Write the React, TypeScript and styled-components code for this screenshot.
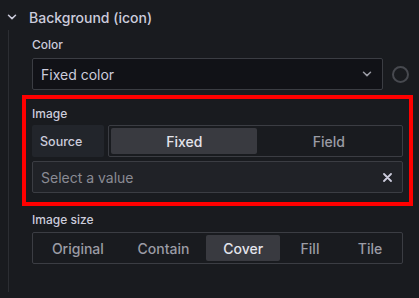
import React, { useState } from "react";
import styled, { createGlobalStyle } from "styled-components";

const colors = {
  BG: "#191b1f",
  CANVAS: "#111217",
  SECONDARY: "#22252b",
  BORDER: "#3b3d43",
  RAIL: "#2c2e33",
  TEXT: "#ccccdc",
  TEXT_STRONG: "#e4e4ec",
  TEXT_MUTED: "#9b9ca5",
  PLACEHOLDER: "#8a8b94",
  ACTIVE: "#393a40",
  HIGHLIGHT: "#ff0000",
};

const GlobalStyle = createGlobalStyle`
  html, body {
    margin: 0;
    background: ${colors.BG};
    font-family: Inter, "Noto Sans", sans-serif;
    color: ${colors.TEXT};
  }
  * { box-sizing: border-box; }
`;

const Page = styled.div`
  width: 419px;
  height: 298px;
  overflow: hidden;
`;

const Header = styled.div`
  display: flex;
  align-items: center;
  gap: 12px;
  height: 26px;
  margin-top: 4px;
  padding-left: 7px;
  font-size: 14px;
  font-weight: 500;
`;

const Body = styled.div`
  margin-left: 8px;
  border-left: 1px solid ${colors.RAIL};
  padding: 7px 16px 0 23px;
  height: 262px;
`;

const Field = styled.div`
  display: flex;
  flex-direction: column;
`;

const Label = styled.div<{ $gap?: number }>`
  font-size: 12px;
  font-weight: 500;
  line-height: 16px;
  margin-bottom: ${(p) => p.$gap ?? 4}px;
`;

const Row = styled.div`
  display: flex;
  align-items: center;
  gap: 9px;
  margin-right: -6px;
`;

const Input = styled.div<{ $tone?: "canvas" | "raised" }>`
  flex: 1 0 auto;
  display: flex;
  align-items: center;
  justify-content: space-between;
  height: 32px;
  padding: 0 10px 0 8px;
  border: 1px solid ${colors.BORDER};
  border-radius: 2px;
  background: ${(p) => (p.$tone === "raised" ? "#202227" : colors.CANVAS)};
  font-size: 14px;
  color: ${colors.TEXT};
`;

const Placeholder = styled.span`
  color: ${colors.PLACEHOLDER};
`;

const Swatch = styled.div`
  width: 17px;
  height: 17px;
  border-radius: 50%;
  border: 2px solid #47494f;
  flex-shrink: 0;
`;

const Highlight = styled.div`
  margin: 5px -10px 6px;
  border: 4px solid ${colors.HIGHLIGHT};
  padding: 7px 6px 9px;
  display: flex;
  flex-direction: column;
`;

const InlineRow = styled.div`
  display: flex;
  gap: 4px;
  margin-bottom: 4px;
`;

const InlineLabel = styled.div`
  width: 72px;
  height: 32px;
  display: flex;
  align-items: center;
  padding: 0 8px;
  background: ${colors.SECONDARY};
  border-radius: 2px;
  font-size: 12.5px;
  font-weight: 500;
`;

const Group = styled.div`
  flex: 1 0 auto;
  display: flex;
  height: 32px;
  padding: 2px;
  border: 1px solid ${colors.BORDER};
  border-radius: 2px;
`;

const Option = styled.button<{ $active: boolean }>`
  flex: 1 1 auto;
  min-width: 60px;
  padding: 0 16px;
  border: none;
  border-radius: 2px;
  font-family: inherit;
  font-size: 14px;
  font-weight: 500;
  color: ${(p) => (p.$active ? colors.TEXT_STRONG : colors.TEXT_MUTED)};
  background: ${(p) => (p.$active ? colors.ACTIVE : "transparent")};
  cursor: pointer;
`;

function Chevron({ color = colors.TEXT_MUTED }: { color?: string }) {
  return (
    <svg width="10" height="6" viewBox="0 0 10 6" fill="none">
      <path d="M1.5 1.2 5 4.6l3.5-3.4" stroke={color} strokeWidth="1.5" strokeLinecap="round" strokeLinejoin="round" />
    </svg>
  );
}

function Cross() {
  return (
    <svg width="9" height="9" viewBox="0 0 9 9" fill="none">
      <path d="M1 1l7 7M8 1 1 8" stroke={colors.TEXT} strokeWidth="1.8" strokeLinecap="round" />
    </svg>
  );
}

function RadioGroup({ options, initial }: { options: string[]; initial: string }) {
  const [value, setValue] = useState(initial);
  return (
    <Group>
      {options.map((o) => (
        <Option key={o} $active={o === value} onClick={() => setValue(o)}>
          {o}
        </Option>
      ))}
    </Group>
  );
}

export default function App() {
  return (
    <Page>
      <GlobalStyle />
      <Header>
        <Chevron color={colors.TEXT} />
        Background (icon)
      </Header>
      <Body>
        <Field>
          <Label $gap={5}>Color</Label>
          <Row>
            <Input>
              Fixed color
              <Chevron />
            </Input>
            <Swatch />
          </Row>
        </Field>
        <Highlight>
          <Label $gap={3}>Image</Label>
          <InlineRow>
            <InlineLabel>Source</InlineLabel>
            <RadioGroup options={["Fixed", "Field"]} initial="Fixed" />
          </InlineRow>
          <Input $tone="raised">
            <Placeholder>Select a value</Placeholder>
            <Cross />
          </Input>
        </Highlight>
        <Field>
          <Label>Image size</Label>
          <RadioGroup options={["Original", "Contain", "Cover", "Fill", "Tile"]} initial="Cover" />
        </Field>
      </Body>
    </Page>
  );
}
